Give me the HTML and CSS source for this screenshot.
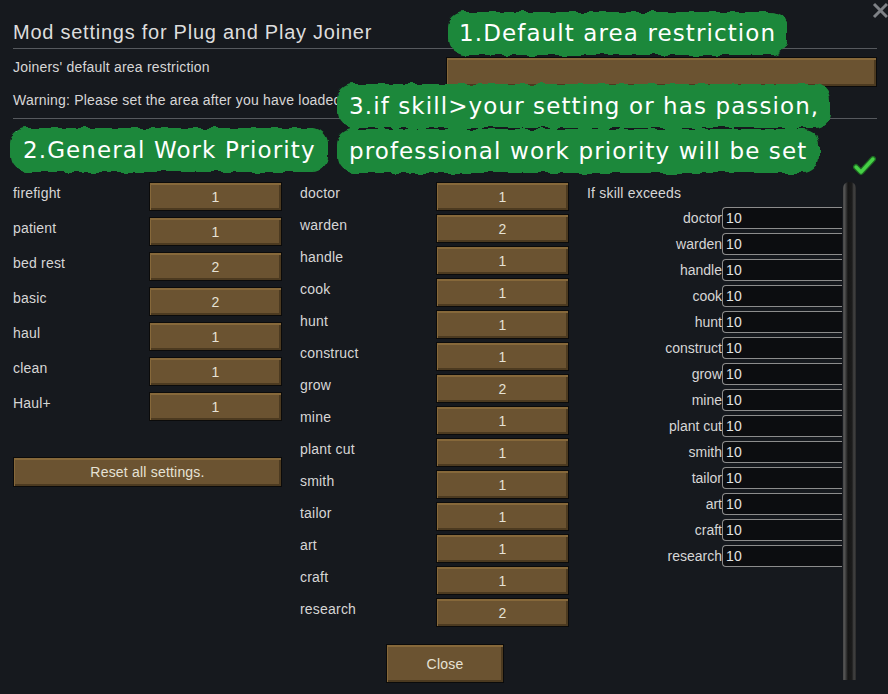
FILE: index.html
```html
<!DOCTYPE html>
<html>
<head>
<meta charset="utf-8">
<title>Mod settings</title>
<link rel="stylesheet" href="styles.css">
</head>
<body>
<svg class="defs" width="0" height="0" aria-hidden="true">
  <filter id="wobble" x="-5%" y="-25%" width="110%" height="150%">
    <feTurbulence type="fractalNoise" baseFrequency="0.1" numOctaves="1" seed="4"/>
    <feDisplacementMap in="SourceGraphic" scale="8" xChannelSelector="R" yChannelSelector="G"/>
  </filter>
</svg>
<div class="window">
  <svg class="close-x" width="18" height="17" viewBox="0 0 18 17"><path d="M2 2 L15 15 M15 2 L2 15" stroke="#7e8186" stroke-width="3"/></svg>

  <h1 class="title">Mod settings for Plug and Play Joiner</h1>

  <section class="area">
    <div class="area-text">
      <p>Joiners' default area restriction</p>
      <p class="warn">Warning: Please set the area after you have loaded</p>
    </div>
    <button class="btn area-btn"></button>
  </section>

  <p class="work-head">Joiners' default work priority</p>
  <div class="toggle-row">
    <svg class="check" width="24" height="20" viewBox="0 0 24 20"><polyline points="3,11 8,16 20,3" fill="none" stroke="#1d6a22" stroke-width="6" stroke-linecap="round" stroke-linejoin="round"/><polyline points="3,11 8,16 20,3" fill="none" stroke="#46d046" stroke-width="3.4" stroke-linecap="round" stroke-linejoin="round"/></svg>
  </div>

  <div class="columns">
    <div class="col col-general">
      <div class="row"><span class="label">firefight</span><button class="btn">1</button></div>
      <div class="row"><span class="label">patient</span><button class="btn">1</button></div>
      <div class="row"><span class="label">bed rest</span><button class="btn">2</button></div>
      <div class="row"><span class="label">basic</span><button class="btn">2</button></div>
      <div class="row"><span class="label">haul</span><button class="btn">1</button></div>
      <div class="row"><span class="label">clean</span><button class="btn">1</button></div>
      <div class="row"><span class="label">Haul+</span><button class="btn">1</button></div>
      <button class="btn reset">Reset all settings.</button>
    </div>

    <div class="col col-prof">
      <div class="row"><span class="label">doctor</span><button class="btn">1</button></div>
      <div class="row"><span class="label">warden</span><button class="btn">2</button></div>
      <div class="row"><span class="label">handle</span><button class="btn">1</button></div>
      <div class="row"><span class="label">cook</span><button class="btn">1</button></div>
      <div class="row"><span class="label">hunt</span><button class="btn">1</button></div>
      <div class="row"><span class="label">construct</span><button class="btn">1</button></div>
      <div class="row"><span class="label">grow</span><button class="btn">2</button></div>
      <div class="row"><span class="label">mine</span><button class="btn">1</button></div>
      <div class="row"><span class="label">plant cut</span><button class="btn">1</button></div>
      <div class="row"><span class="label">smith</span><button class="btn">1</button></div>
      <div class="row"><span class="label">tailor</span><button class="btn">1</button></div>
      <div class="row"><span class="label">art</span><button class="btn">1</button></div>
      <div class="row"><span class="label">craft</span><button class="btn">1</button></div>
      <div class="row"><span class="label">research</span><button class="btn">2</button></div>
    </div>

    <div class="skill-pane">
      <div class="col col-skill">
        <p class="skill-head">If skill exceeds</p>
        <div class="skill-rows">
          <div class="srow"><span class="slabel">doctor</span><span class="field">10</span></div>
          <div class="srow"><span class="slabel">warden</span><span class="field">10</span></div>
          <div class="srow"><span class="slabel">handle</span><span class="field">10</span></div>
          <div class="srow"><span class="slabel">cook</span><span class="field">10</span></div>
          <div class="srow"><span class="slabel">hunt</span><span class="field">10</span></div>
          <div class="srow"><span class="slabel">construct</span><span class="field">10</span></div>
          <div class="srow"><span class="slabel">grow</span><span class="field">10</span></div>
          <div class="srow"><span class="slabel">mine</span><span class="field">10</span></div>
          <div class="srow"><span class="slabel">plant cut</span><span class="field">10</span></div>
          <div class="srow"><span class="slabel">smith</span><span class="field">10</span></div>
          <div class="srow"><span class="slabel">tailor</span><span class="field">10</span></div>
          <div class="srow"><span class="slabel">art</span><span class="field">10</span></div>
          <div class="srow"><span class="slabel">craft</span><span class="field">10</span></div>
          <div class="srow"><span class="slabel">research</span><span class="field">10</span></div>
        </div>
      </div>
      <div class="scrollbar"></div>
    </div>
  </div>

  <div class="footer"><button class="btn close">Close</button></div>

  <div class="note note1">1.Default area restriction</div>
  <div class="note note3a">3.if skill&gt;your setting or has passion,</div>
  <div class="note note3b">professional work priority will be set</div>
  <div class="note note2">2.General Work Priority</div>
</div>
</body>
</html>
```

FILE: styles.css
```css
html, body {
  margin: 0;
  background: #16191e;
}
body {
  font-family: "Liberation Sans", Arial, sans-serif;
  font-size: 14px;
  letter-spacing: 0.2px;
  color: #d6d6d6;
}
.defs {
  position: absolute;
  width: 0;
  height: 0;
}
.window {
  position: relative;
  width: 888px;
  height: 694px;
  box-sizing: border-box;
  padding: 20px 11px 0 13px;
  overflow: hidden;
}
.close-x {
  position: absolute;
  left: 872px;
  top: 2px;
}
.title {
  margin: 0;
  font-weight: normal;
  font-size: 20px;
  letter-spacing: 0.75px;
  line-height: 24px;
  padding-bottom: 4px;
  border-bottom: 1px solid #56595e;
  color: #dddddd;
}
.btn {
  box-sizing: border-box;
  width: 133px;
  height: 29px;
  padding: 0;
  border: 1px solid #0b0b0b;
  background: #6b5331;
  box-shadow: inset 1px 2px 0 #86683a, inset -2px -2px 0 #4c3a20;
  color: #e6e2d5;
  font-family: "Liberation Sans", Arial, sans-serif;
  font-size: 14px;
  letter-spacing: 0.2px;
  text-align: center;
}
.area {
  display: flex;
  padding: 8px 0 8px;
  border-bottom: 1px solid #56595e;
}
.area-text {
  flex: 1;
  min-width: 0;
}
.area-text p {
  margin: 0;
  line-height: 20px;
  white-space: nowrap;
}
.area-text .warn {
  margin-top: 13px;
}
.area-btn {
  flex-shrink: 0;
  width: 431px;
  height: 30px;
}
.work-head {
  margin: 0;
  padding-top: 7px;
  line-height: 20px;
}
.toggle-row {
  height: 36px;
  display: flex;
  justify-content: flex-end;
  align-items: center;
  padding-top: 4px;
  box-sizing: border-box;
}
.columns {
  display: flex;
  align-items: flex-start;
  gap: 18px;
}
.col {
  display: flex;
  flex-direction: column;
}
.col-general {
  width: 269px;
  gap: 6px;
}
.col-prof {
  width: 269px;
  gap: 3px;
}
.row {
  display: flex;
  align-items: flex-start;
  height: 29px;
}
.label {
  width: 136px;
  padding-top: 1px;
  line-height: 20px;
  white-space: nowrap;
}
.reset {
  width: 269px;
  height: 30px;
  margin-top: 30px;
}
.skill-pane {
  display: flex;
  align-items: flex-start;
}
.col-skill {
  width: 256px;
}
.skill-head {
  margin: 0;
  padding-top: 1px;
  line-height: 20px;
}
.skill-rows {
  margin-top: 4px;
  display: flex;
  flex-direction: column;
  gap: 4px;
}
.srow {
  display: flex;
  align-items: center;
  height: 22px;
}
.slabel {
  width: 135px;
  text-align: right;
  white-space: nowrap;
  letter-spacing: 0;
}
.field {
  box-sizing: border-box;
  width: 120px;
  height: 22px;
  line-height: 20px;
  padding-left: 3px;
  border: 1px solid #8c8c8c;
  border-right: none;
  border-radius: 4px 0 0 4px;
  background: #0c0d10;
  color: #e2e2e2;
}
.scrollbar {
  width: 13px;
  height: 498px;
  border-radius: 6px 6px 0 0;
  background: linear-gradient(to right, #3a3a3a 0, #5a5a5a 1px, #3a3a3a 3px, #151515 5px, #1c1c1c 9px, #444 11px, #2a2a2a 13px);
}
.footer {
  margin-top: -36px;
  display: flex;
  justify-content: center;
}
.close {
  width: 118px;
  height: 39px;
}
.note {
  position: absolute;
  z-index: 1;
  height: 44px;
  line-height: 44px;
  padding: 0 12px;
  white-space: nowrap;
  font-family: "DejaVu Sans", Verdana, sans-serif;
  font-size: 23px;
  letter-spacing: 1.1px;
  color: #ffffff;
}
.note::before {
  content: "";
  position: absolute;
  inset: 0;
  z-index: -1;
  background: #1e883b;
  border-radius: 16px;
  filter: url(#wobble);
}
.note1 {
  left: 448px;
  top: 12px;
  height: 43px;
  line-height: 43px;
  padding: 0 11px;
}
.note3a {
  left: 337px;
  top: 84px;
}
.note3b {
  left: 337px;
  top: 129px;
}
.note2 {
  left: 10px;
  top: 128px;
  padding: 0 12px 0 13px;
}
```
